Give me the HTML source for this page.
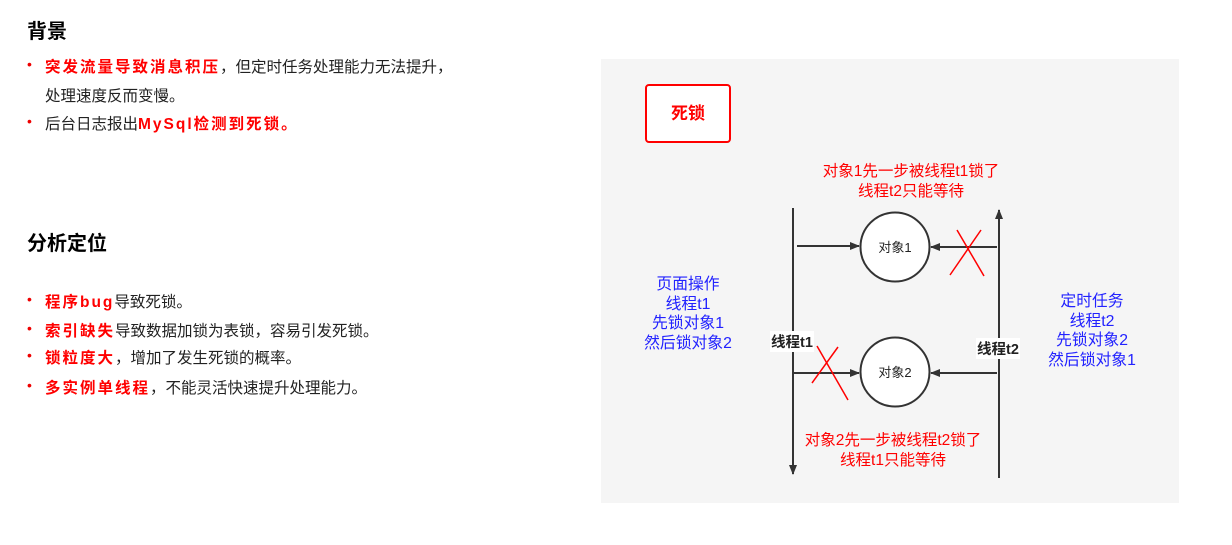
<!DOCTYPE html>
<html><head><meta charset="utf-8"><style>
body{margin:0;width:1232px;height:545px;background:#fff;position:relative;overflow:hidden;font-family:"Liberation Sans","Noto Sans CJK SC",sans-serif;}
.a{position:absolute;white-space:nowrap;}
h2{position:absolute;margin:0;font-size:20px;font-weight:bold;color:#000;left:27px;}
.li{position:absolute;left:30px;font-size:15.5px;color:#222;white-space:nowrap;}
.li:before{content:"•";color:#e00;position:absolute;left:-3px;font-size:14px;top:1px;}
.li span.r{color:#f00;font-weight:bold;letter-spacing:2px;}
.li .t{margin-left:15px;}
.r2{color:#f00;font-size:15.5px;text-align:center;line-height:20px;}
.b2{color:#22f;font-size:15.8px;text-align:center;line-height:19.5px;}
</style></head><body>
<h2 style="top:15px">背景</h2>
<div class="li" style="top:55px"><span class="t"><span class="r">突发流量导致消息积压</span>，但定时任务处理能力无法提升，</span></div>
<div class="a" style="left:45px;top:84px;font-size:15.5px;color:#222">处理速度反而变慢。</div>
<div class="li" style="top:112px"><span class="t">后台日志报出<span class="r">MySql检测到死锁。</span></span></div>
<h2 style="top:227px">分析定位</h2>
<div class="li" style="top:290px"><span class="t"><span class="r">程序bug</span>导致死锁。</span></div>
<div class="li" style="top:319px"><span class="t"><span class="r">索引缺失</span>导致数据加锁为表锁，容易引发死锁。</span></div>
<div class="li" style="top:346px"><span class="t"><span class="r">锁粒度大</span>，增加了发生死锁的概率。</span></div>
<div class="li" style="top:376px"><span class="t"><span class="r">多实例单线程</span>，不能灵活快速提升处理能力。</span></div>

<div class="a" style="left:601px;top:59px;width:578px;height:444px;background:#f5f5f5"></div>
<div class="a" style="left:645px;top:84px;width:82px;height:55px;border:2px solid #f00;border-radius:4px;background:#fff;color:#f00;font-weight:bold;font-size:17px;text-align:center;line-height:55px">死锁</div>
<svg class="a" style="left:0;top:0" width="1232" height="545">
<defs><marker id="m" markerWidth="10" markerHeight="10" refX="9" refY="5" orient="auto" markerUnits="userSpaceOnUse"><path d="M0,1 L10,5 L0,9 Z" fill="#333"/></marker></defs>
<g stroke="#333" stroke-width="2" fill="none">
<line x1="793" y1="208" x2="793" y2="474" marker-end="url(#m)"/>
<line x1="999" y1="478" x2="999" y2="210" marker-end="url(#m)"/>
<line x1="797" y1="246" x2="859" y2="246" marker-end="url(#m)"/>
<line x1="997" y1="247" x2="931" y2="247" marker-end="url(#m)"/>
<line x1="793" y1="373" x2="859" y2="373" marker-end="url(#m)"/>
<line x1="997" y1="373" x2="931" y2="373" marker-end="url(#m)"/>
</g>
<circle cx="895" cy="247" r="34.5" fill="#fff" stroke="#333" stroke-width="2"/>
<circle cx="895" cy="372" r="34.5" fill="#fff" stroke="#333" stroke-width="2"/>
<g stroke="#f00" stroke-width="1.5">
<line x1="950" y1="275" x2="981" y2="230"/><line x1="957" y1="230" x2="984" y2="276"/>
<line x1="812" y1="383" x2="838" y2="347"/><line x1="817" y1="346" x2="848" y2="400"/>
</g>
<text x="895" y="252" font-size="13" text-anchor="middle" fill="#222" font-family="Liberation Sans,Noto Sans CJK SC,sans-serif">对象1</text>
<text x="895" y="377" font-size="13" text-anchor="middle" fill="#222" font-family="Liberation Sans,Noto Sans CJK SC,sans-serif">对象2</text>
</svg>
<div class="a r2" style="left:811px;top:162px;width:200px">对象1先一步被线程t1锁了<br>线程t2只能等待</div>
<div class="a r2" style="left:793px;top:431px;width:200px">对象2先一步被线程t2锁了<br>线程t1只能等待</div>
<div class="a b2" style="left:628px;top:275px;width:120px">页面操作<br>线程t1<br>先锁对象1<br>然后锁对象2</div>
<div class="a b2" style="left:1032px;top:292px;width:120px">定时任务<br>线程t2<br>先锁对象2<br>然后锁对象1</div>
<div class="a" style="left:770px;top:331px;font-size:14.5px;font-weight:bold;color:#222;background:#fff;padding:0 1px">线程t1</div>
<div class="a" style="left:976px;top:338px;font-size:14.5px;font-weight:bold;color:#222;background:#fff;padding:0 1px">线程t2</div>
</body></html>
